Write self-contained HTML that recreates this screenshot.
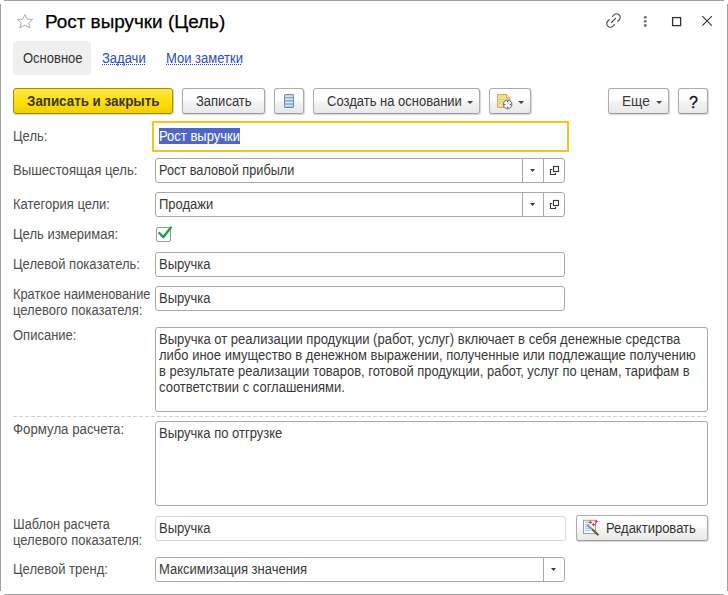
<!DOCTYPE html>
<html><head><meta charset="utf-8">
<style>
html,body{margin:0;padding:0;background:#fff;}
body{width:728px;height:595px;position:relative;overflow:hidden;font-family:"Liberation Sans",sans-serif;}
.a{position:absolute;}
.t{position:absolute;font-size:14px;line-height:16px;white-space:nowrap;color:#4d4d4d;transform:scaleX(0.9286);transform-origin:0 0;}
.v{color:#383838;}
.bl{position:absolute;background:#a0a0a0;}
.inp{position:absolute;box-sizing:border-box;border:1px solid #a8a8a8;border-radius:3px;background:#fff;}
.btn{position:absolute;box-sizing:border-box;border:1px solid #acacac;border-bottom-color:#9c9c9c;border-radius:3px;background:linear-gradient(#ffffff 0%,#fefefe 46%,#f3f3f3 54%,#e9e9e9 100%);box-shadow:0.5px 1px 1px rgba(0,0,0,0.16);}
</style></head><body>
<!-- window border -->
<div class="bl" style="left:4px;top:0;width:720px;height:1px"></div>
<div class="bl" style="left:4px;top:594px;width:720px;height:1px"></div>
<div class="bl" style="left:0;top:4px;width:1px;height:587px"></div>
<div class="bl" style="left:727px;top:4px;width:1px;height:587px"></div>

<!-- star -->
<svg class="a" style="left:0;top:0" width="40" height="40" viewBox="0 0 40 40">
<polygon points="24.95,14.6 27.2,19.2 32.6,19.4 28.6,23.2 30.1,28.0 24.95,25.0 19.8,28.0 21.3,23.2 17.3,19.4 22.7,19.2" fill="none" stroke="#a9aeb5" stroke-width="1" stroke-linejoin="miter"/>
</svg>
<!-- title -->
<div class="a" style="left:45px;top:10px;font-size:18.9px;line-height:24px;color:#000;white-space:nowrap;-webkit-text-stroke:0.25px #000">Рост выручки (Цель)</div>

<!-- title icons -->
<svg class="a" style="left:600px;top:8px" width="120" height="26" viewBox="600 8 120 26">
<g transform="rotate(-45 613.5 20.5) translate(613.5 20.5)" fill="none" stroke="#555" stroke-width="1.25" stroke-linecap="round">
<path d="M2.3,-3.6 L4.4,-3.6 A3.6,3.6 0 0 1 4.4,3.6 L2.3,3.6"/>
<path d="M-2.3,3.6 L-4.4,3.6 A3.6,3.6 0 0 1 -4.4,-3.6 L-2.3,-3.6"/>
<path d="M-2.8,0 L2.8,0"/>
</g>
<circle cx="645.3" cy="17.3" r="1.4" fill="#707070"/>
<circle cx="645.3" cy="21.4" r="1.4" fill="#707070"/>
<circle cx="645.3" cy="25.5" r="1.4" fill="#707070"/>
<rect x="672.6" y="17.6" width="8" height="8" fill="none" stroke="#333" stroke-width="1.3"/>
<path d="M702.3,16.2 L711.8,25.7 M711.8,16.2 L702.3,25.7" stroke="#333" stroke-width="1.1"/>
</svg>

<!-- tabs -->
<div class="a" style="left:13px;top:41px;width:78px;height:34px;background:#efefef;border-radius:4px"></div>
<div class="t" style="left:23px;top:50px;color:#333">Основное</div>
<div class="t" style="left:102px;top:50px;color:#2b4ac0">Задачи</div>
<div class="a" style="left:102px;top:64px;width:43px;border-top:1px dotted #2b4ac0"></div>
<div class="t" style="left:166px;top:50px;color:#2b4ac0">Мои заметки</div>
<div class="a" style="left:166px;top:64px;width:75px;border-top:1px dotted #2b4ac0"></div>

<!-- buttons -->
<div class="a" style="left:13px;top:88px;width:160px;height:26px;box-sizing:border-box;border:1px solid #a48f00;border-radius:3px;background:linear-gradient(#ffe84c 0%,#ffdf0a 50%,#f1cf00 100%);box-shadow:0.5px 1px 1px rgba(0,0,0,0.18)"></div>
<div class="t" style="left:27px;top:93px;font-weight:bold;color:#383838;transform:scaleX(0.955)">Записать и закрыть</div>

<div class="btn" style="left:182px;top:88px;width:83px;height:26px"></div>
<div class="t" style="left:196px;top:93px;color:#333">Записать</div>

<div class="btn" style="left:274px;top:88px;width:30px;height:26px"></div>
<svg class="a" style="left:280px;top:90px" width="20" height="22" viewBox="280 90 20 22">
<rect x="284" y="94" width="10" height="14" rx="1.5" fill="#7f9fbd"/>
<rect x="284.5" y="94.5" width="9" height="13" rx="1.2" fill="none" stroke="#6c8cab" stroke-width="1"/>
<rect x="285" y="95.2" width="8" height="1.9" fill="#d3e4f3"/>
<rect x="285" y="98.3" width="8" height="1.9" fill="#d3e4f3"/>
<rect x="285" y="101.5" width="8" height="1.9" fill="#d3e4f3"/>
<rect x="285" y="104.7" width="8" height="1.9" fill="#d3e4f3"/>
</svg>

<div class="btn" style="left:313px;top:88px;width:167px;height:26px"></div>
<div class="t" style="left:327px;top:93px;color:#333">Создать на основании</div>


<div class="btn" style="left:489px;top:88px;width:42px;height:26px"></div>
<svg class="a" style="left:492px;top:90px" width="24" height="22" viewBox="492 90 24 22">
<path d="M497.5,94.5 H506.5 L510,98 V107.5 H497.5 Z" fill="#f3df90" stroke="#d0ac48" stroke-width="1" stroke-linejoin="round"/>
<path d="M506.5,94.5 V98 H510" fill="#f7e9b0" stroke="#d0ac48" stroke-width="0.9"/>
<path d="M499,99.5 H501 M502,99.5 H504 M499,101.5 H499.8 M501,101.5 H503 M499,103.3 H501" stroke="#d9bb62" stroke-width="0.9"/>
<circle cx="507.6" cy="104.4" r="4.2" fill="#fff" stroke="#5d89b8" stroke-width="1.3"/>
<circle cx="507.6" cy="101.6" r="0.75" fill="#e41e1e"/><circle cx="507.6" cy="107.2" r="0.75" fill="#e41e1e"/>
<circle cx="504.8" cy="104.4" r="0.75" fill="#e41e1e"/><circle cx="510.4" cy="104.4" r="0.75" fill="#e41e1e"/>
<path d="M507.6,104.4 L509,102.3" stroke="#7c9ed0" stroke-width="0.9"/>
</svg>


<div class="btn" style="left:608px;top:88px;width:61px;height:26px"></div>
<div class="t" style="left:622px;top:93px;color:#3a3a3a;transform:scaleX(0.975)">Еще</div>


<div class="btn" style="left:678px;top:88px;width:30px;height:26px"></div>
<div class="t" style="left:689px;top:94.5px;color:#111;font-size:16px;transform:none;-webkit-text-stroke:0.3px #111">?</div>

<svg class="a" style="left:460px;top:96px" width="210" height="12" viewBox="460 96 210 12">
<path d="M467.1,101 H473.1 L470.1,104 Z M518.1,101 H524.1 L521.1,104 Z M656.1,101 H662.1 L659.1,104 Z" fill="#444"/>
</svg>
<!-- labels -->
<div class="t" style="left:13px;top:128px">Цель:</div>
<div class="t" style="left:13px;top:162px;transform:scaleX(0.94)">Вышестоящая цель:</div>
<div class="t" style="left:13px;top:196px">Категория цели:</div>
<div class="t" style="left:13px;top:226px">Цель измеримая:</div>
<div class="t" style="left:13px;top:256px">Целевой показатель:</div>
<div class="t" style="left:13px;top:286px;transform:scaleX(0.915)">Краткое наименование</div>
<div class="t" style="left:13px;top:302px">целевого показателя:</div>
<div class="t" style="left:13px;top:327px">Описание:</div>
<div class="t" style="left:13px;top:421px;transform:scaleX(0.946)">Формула расчета:</div>
<div class="t" style="left:13px;top:516px;transform:scaleX(0.907)">Шаблон расчета</div>
<div class="t" style="left:13px;top:532px">целевого показателя:</div>
<div class="t" style="left:13px;top:561px">Целевой тренд:</div>

<!-- fields -->
<div class="a" style="left:152px;top:121px;width:417px;height:31px;box-sizing:border-box;border:2px solid #f7c51a"></div>
<div class="a" style="left:159px;top:128px;width:81px;height:16px;background:#4f66c6"></div>
<div class="t" style="left:159px;top:128px;color:#fff">Рост выручки</div>

<div class="inp" style="left:155px;top:158px;width:410px;height:25px"></div>
<div class="a" style="left:522px;top:158px;width:1px;height:25px;background:#a8a8a8"></div>
<div class="a" style="left:543px;top:158px;width:1px;height:25px;background:#a8a8a8"></div>
<div class="t v" style="left:159px;top:162px;transform:scaleX(0.908)">Рост валовой прибыли</div>

<div class="inp" style="left:155px;top:192px;width:410px;height:25px"></div>
<div class="a" style="left:522px;top:192px;width:1px;height:25px;background:#a8a8a8"></div>
<div class="a" style="left:543px;top:192px;width:1px;height:25px;background:#a8a8a8"></div>
<div class="t v" style="left:159px;top:196px">Продажи</div>

<div class="a" style="left:156px;top:227px;width:15px;height:15px;box-sizing:border-box;border:1px solid #9a9a9a;border-radius:2px"></div>
<svg class="a" style="left:150px;top:220px" width="30" height="30" viewBox="150 220 30 30">
<path d="M159.3,233 L163.3,237.2 L170.8,227.6" fill="none" stroke="#18a04a" stroke-width="2.4" stroke-linecap="round" stroke-linejoin="round"/>
</svg>

<div class="inp" style="left:155px;top:252px;width:410px;height:25px"></div>
<div class="t v" style="left:159px;top:256px">Выручка</div>

<div class="inp" style="left:155px;top:286px;width:410px;height:25px"></div>
<div class="t v" style="left:159px;top:290px">Выручка</div>

<div class="inp" style="left:155px;top:327px;width:553px;height:85px"></div>
<div class="t v" style="left:159px;top:331px;transform:scaleX(0.9307)">Выручка от реализации продукции (работ, услуг) включает в себя денежные средства</div>
<div class="t v" style="left:159px;top:347px">либо иное имущество в денежном выражении, полученные или подлежащие получению</div>
<div class="t v" style="left:159px;top:363px;transform:scaleX(0.9233)">в результате реализации товаров, готовой продукции, работ, услуг по ценам, тарифам в</div>
<div class="t v" style="left:159px;top:379px">соответствии с соглашениями.</div>

<div class="a" style="left:13px;top:416px;width:694px;height:1px;background:repeating-linear-gradient(90deg,#d0d0d0 0 4px,transparent 4px 6px)"></div>

<div class="inp" style="left:155px;top:421px;width:553px;height:85px"></div>
<div class="t v" style="left:159px;top:425px">Выручка по отгрузке</div>

<div class="inp" style="left:155px;top:516px;width:411px;height:25px;border-color:#d6d6d6"></div>
<div class="t v" style="left:159px;top:520px">Выручка</div>

<div class="btn" style="left:576px;top:515px;width:132px;height:26px"></div>
<svg class="a" style="left:580px;top:516px" width="24" height="24" viewBox="580 516 24 24">
<rect x="583.5" y="520.3" width="12" height="13.3" fill="#f4f7fb" stroke="#8d9fb6" stroke-width="1"/>
<path d="M585,522.3 H590 M585,524.3 H589 M585,526.3 H588.5 M585,528.3 H590 M585,530.3 H590" stroke="#a8b7c8" stroke-width="0.9"/>
<path d="M587.3,525.1 L592.1,529.3" stroke="#4fa3e6" stroke-width="2"/>
<path d="M592.1,529.3 L598.5,535.2" stroke="#7a5410" stroke-width="2"/>
<path d="M589.85,520.6999999999999 H590.9499999999999 V521.85 H592.1 V522.9499999999999 H590.9499999999999 V524.1 H589.85 V522.9499999999999 H588.6999999999999 V521.85 H589.85 Z" fill="#e8441e"/><path d="M592.95,522.9 H594.05 V524.0500000000001 H595.2 V525.15 H594.05 V526.3000000000001 H592.95 V525.15 H591.8 V524.0500000000001 H592.95 Z" fill="#e8441e"/><path d="M595.95,519.8 H597.05 V520.95 H598.2 V522.05 H597.05 V523.2 H595.95 V522.05 H594.8 V520.95 H595.95 Z" fill="#e8441e"/>
</svg>
<div class="t" style="left:606px;top:520px;color:#333">Редактировать</div>

<div class="inp" style="left:155px;top:557px;width:410px;height:25px"></div>
<div class="a" style="left:543px;top:557px;width:1px;height:25px;background:#a8a8a8"></div>
<div class="t v" style="left:159px;top:561px">Максимизация значения</div>

<!-- dropdown arrows & open icons -->
<svg class="a" style="left:520px;top:150px" width="50" height="70" viewBox="520 150 50 70">
<path d="M530,169 H535 L532.5,171.9 Z" fill="#3a3a3a"/>
<path d="M530,203 H535 L532.5,205.9 Z" fill="#3a3a3a"/>
<g fill="none" stroke="#3a3a3a" stroke-width="1.15">
<rect x="553.5" y="166.5" width="5" height="5"/>
<path d="M552.3,169.5 H550.5 V174.5 H555.5 V172.7"/>
<rect x="553.5" y="200.5" width="5" height="5"/>
<path d="M552.3,203.5 H550.5 V208.5 H555.5 V206.7"/>
</g>
</svg>
<svg class="a" style="left:540px;top:560px" width="20" height="20" viewBox="540 560 20 20">
<path d="M551,568 H556 L553.5,570.9 Z" fill="#3a3a3a"/>
</svg>
</body></html>
